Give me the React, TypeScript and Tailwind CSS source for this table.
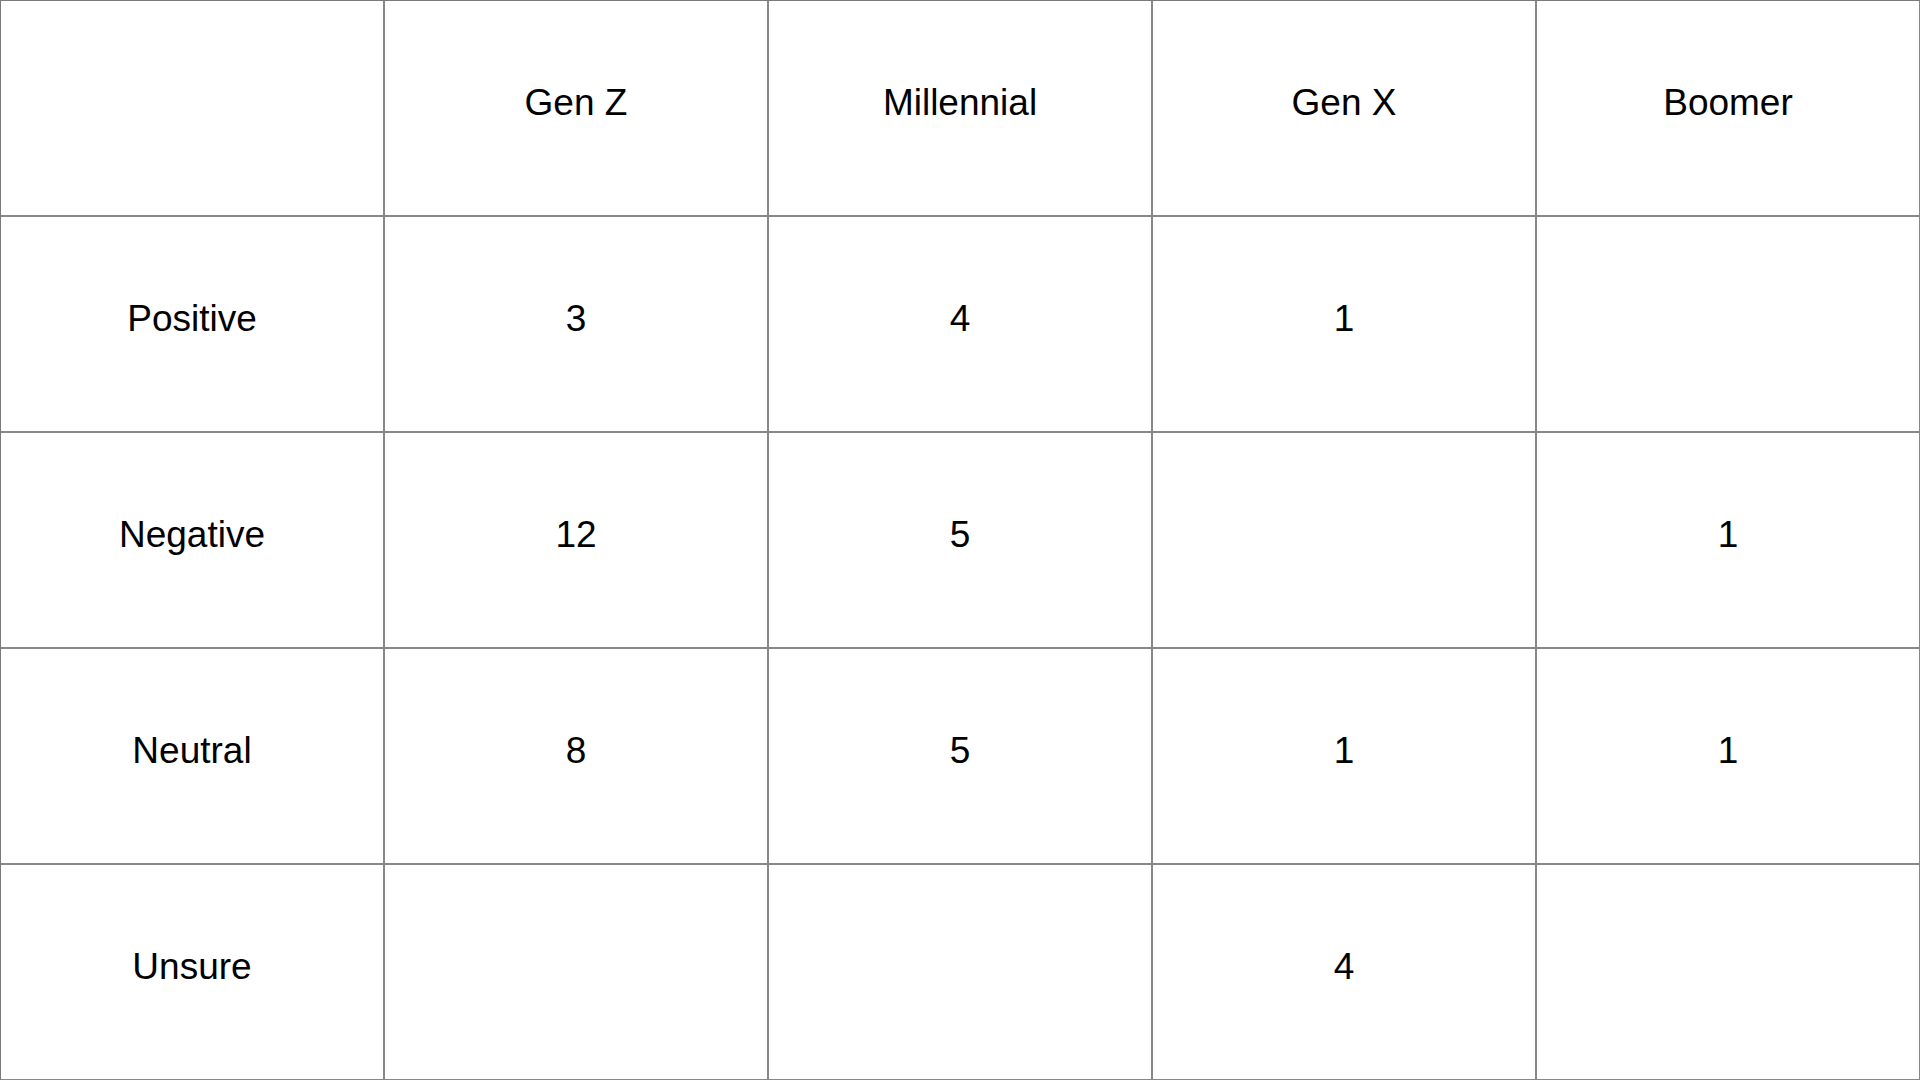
import React from "react";

const columns = ["", "Gen Z", "Millennial", "Gen X", "Boomer"];

const rows: { label: string; values: string[] }[] = [
  { label: "Positive", values: ["3", "4", "1", ""] },
  { label: "Negative", values: ["12", "5", "", "1"] },
  { label: "Neutral", values: ["8", "5", "1", "1"] },
  { label: "Unsure", values: ["", "", "4", ""] },
];

const Cell = ({ children }: { children?: React.ReactNode }) => (
  <div className="flex items-center justify-center border-r-2 border-b-2 border-[#878787] pb-3 text-[37px] leading-none text-black">
    {children}
  </div>
);

export default function App() {
  return (
    <div
      className="grid h-[1080px] w-[1920px] grid-cols-[repeat(5,384px)] grid-rows-[repeat(5,216px)] border-l border-t border-[#7a7a7a] bg-white"
      style={{ fontFamily: '"Liberation Sans", Arial, sans-serif' }}
    >
      {columns.map((c, i) => (
        <Cell key={"h" + i}>{c}</Cell>
      ))}
      {rows.map((r) => (
        <React.Fragment key={r.label}>
          <Cell>{r.label}</Cell>
          {r.values.map((v, j) => (
            <Cell key={r.label + j}>{v}</Cell>
          ))}
        </React.Fragment>
      ))}
    </div>
  );
}
